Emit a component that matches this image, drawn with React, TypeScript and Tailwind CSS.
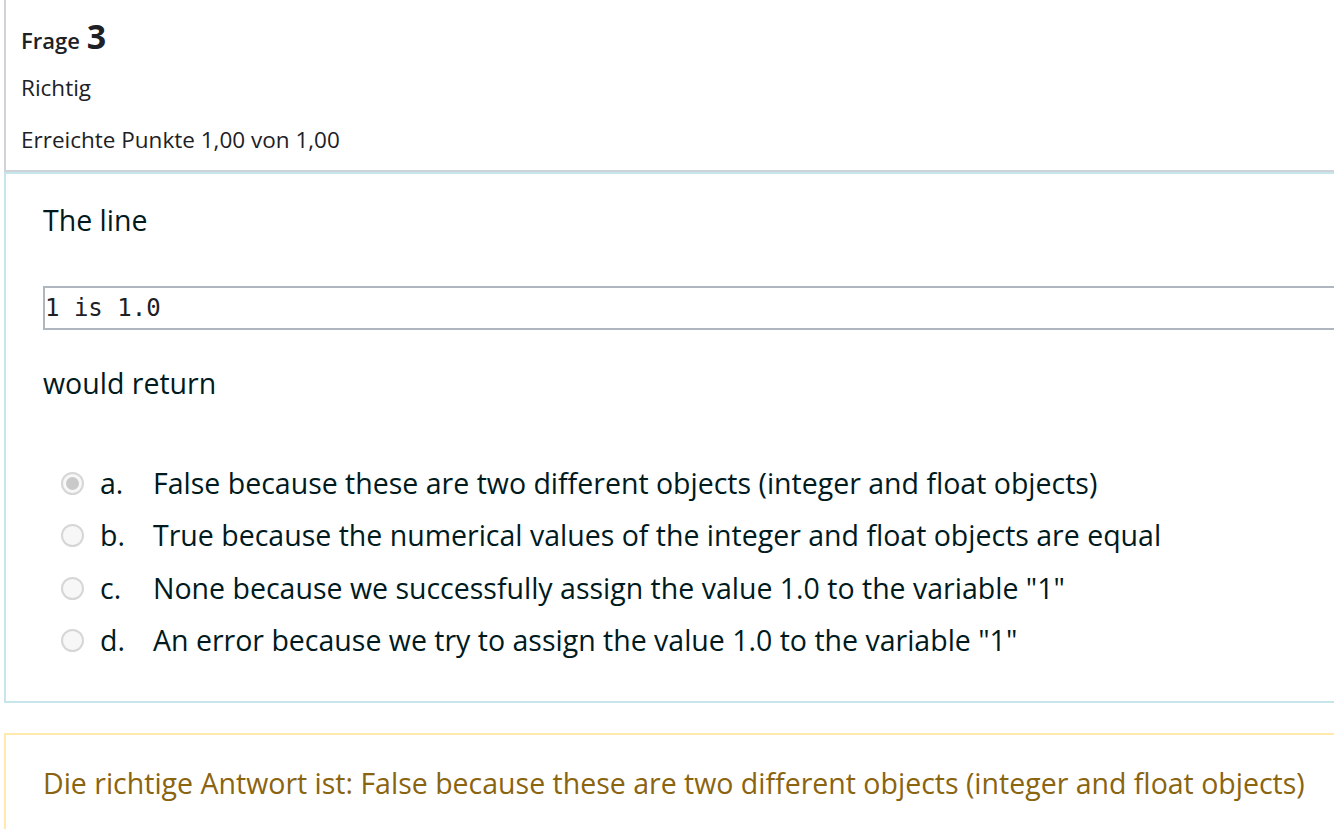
import React from "react";

const font = { fontFamily: '"Open Sans", "Noto Sans", sans-serif' };

function Radio({ checked }: { checked?: boolean }) {
  return (
    <span className="flex h-[23px] w-[23px] items-center justify-center rounded-full border-2 border-[#d6d6d6] bg-[#f7f7f7]">
      {checked ? <span className="h-[13px] w-[13px] rounded-full bg-[#c9c9c9]" /> : null}
    </span>
  );
}

const options = [
  { l: "a.", t: "False because these are two different objects (integer and float objects)", c: true },
  { l: "b.", t: "True because the numerical values of the integer and float objects are equal" },
  { l: "c.", t: 'None because we successfully assign the value 1.0 to the variable "1"' },
  { l: "d.", t: 'An error because we try to assign the value 1.0 to the variable "1"' },
];

export default function App() {
  return (
    <div className="h-[829px] w-[1334px] overflow-hidden bg-white pl-[4px]" style={font}>
      <div className="h-[172px] border-b-2 border-l-2 border-[#ced3d9] pl-[15px] pt-[14px] text-[#1d2125]">
        <div className="flex h-[44px] items-baseline leading-[44px]">
          <span className="text-[22px] font-semibold">Frage</span>
          <span className="ml-[7px] text-[34px] font-bold">3</span>
        </div>
        <div className="mt-[15px] h-[30px] text-[22.5px] leading-[30px]">Richtig</div>
        <div className="mt-[22px] h-[30px] text-[22.5px] leading-[30px]">Erreichte Punkte 1,00 von 1,00</div>
      </div>
      <div className="h-[531px] border-b-2 border-l-2 border-t-2 border-[#c6e6ec] pl-[37px] pt-[26px] text-[#001a1e]">
        <div className="h-[40px] text-[28.5px] leading-[40px]">The line</div>
        <div
          className="mt-[46px] flex h-[44px] items-center border-2 border-r-0 border-[#b0b6bd] text-[24px] text-[#1d2125]"
          style={{ fontFamily: '"DejaVu Sans Mono", "Liberation Mono", monospace' }}
        >
          1 is 1.0
        </div>
        <div className="mt-[33px] h-[40px] text-[28.5px] leading-[40px]">would return</div>
        <div className="mt-[54px] flex flex-col">
          {options.map((o) => (
            <div key={o.l} className="flex h-[52.5px] items-center">
              <span className="ml-[18px] mr-[16px]">
                <Radio checked={o.c} />
              </span>
              <span className="w-[53px] text-[28.5px]">{o.l}</span>
              <span className="text-[28.5px]">{o.t}</span>
            </div>
          ))}
        </div>
      </div>
      <div className="mt-[30px] h-[120px] border-l-2 border-t-2 border-[#ffe9ad] pl-[37px] pt-[28px] text-[#8a640f]">
        <div className="h-[40px] text-[28.5px] leading-[40px]">
          Die richtige Antwort ist: False because these are two different objects (integer and float objects)
        </div>
      </div>
    </div>
  );
}
